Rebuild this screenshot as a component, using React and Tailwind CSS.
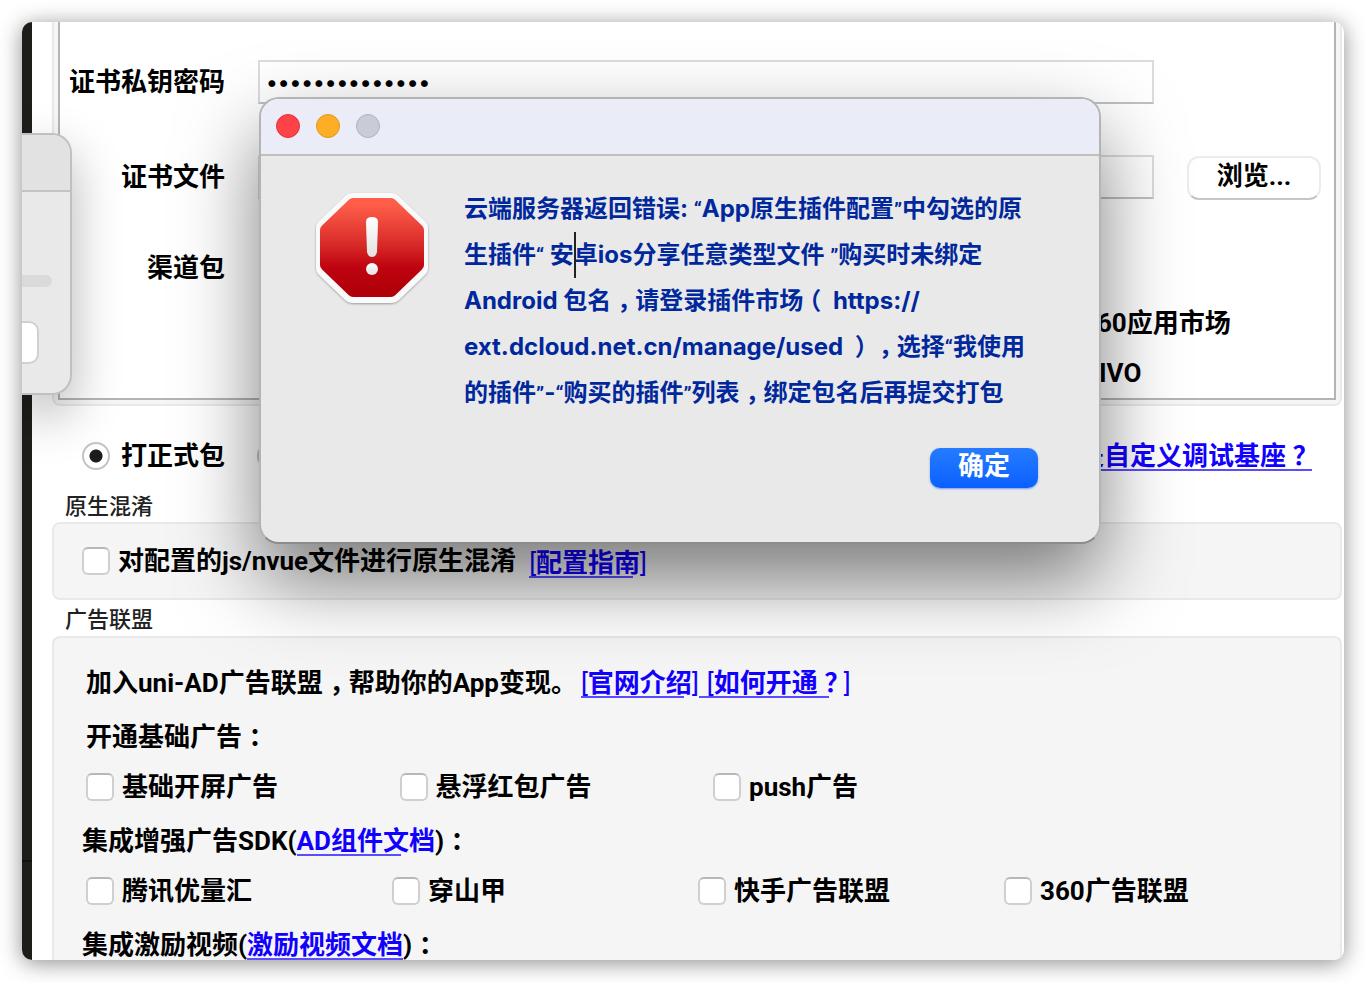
import React, { useState } from 'react';

// Full-width punctuation that sits in the middle of its cell
const Mid = ({ children }) => (
    <span className="inline-block w-[1em] text-center leading-none [font-feature-settings:'halt']">{children}</span>
);

const Quote = ({ children }) => (
    <span className="font-['Roboto',sans-serif] text-[20px] leading-none">{children}</span>
);

const Bracket = ({ children }) => <span className="font-normal">{children}</span>;

const CheckBox = ({ id, label }) => (
    <div className="flex items-center gap-2">
        <input
            id={id}
            type="checkbox"
            className="h-7 w-7 shrink-0 appearance-none rounded-md border-2 border-[#cfcfcf] border-t-[#b8b8b8] bg-white checked:bg-[#1a73ff]"
        />
        <label htmlFor={id} className="whitespace-nowrap">{label}</label>
    </div>
);

const Radio = ({ id, label, checked, onChange }) => (
    <div className="flex items-center gap-[11px]">
        <input
            id={id}
            type="radio"
            name="package"
            checked={checked}
            onChange={onChange}
            className="h-7 w-7 shrink-0 appearance-none rounded-full border-2 border-[#c4c4c4] bg-white checked:bg-[radial-gradient(circle,#1c1c1c_6px,#ffffff_7px)]"
        />
        <label htmlFor={id} className="whitespace-nowrap">{label}</label>
    </div>
);

const StopIcon = () => (
    <svg className="h-[116px] w-[120px]" viewBox="0 0 120 116" aria-hidden="true">
        <defs>
            <linearGradient id="stopRed" x1="0" y1="0" x2="0" y2="1">
                <stop offset="0" stopColor="#ff5f4a" />
                <stop offset="0.45" stopColor="#d92c2a" />
                <stop offset="0.72" stopColor="#bf0410" />
                <stop offset="1" stopColor="#b00009" />
            </linearGradient>
            <linearGradient id="stopMark" x1="0" y1="0" x2="0" y2="1">
                <stop offset="0" stopColor="#ffffff" />
                <stop offset="1" stopColor="#e2e2e2" />
            </linearGradient>
            <filter id="stopShadow" x="-20%" y="-20%" width="140%" height="140%">
                <feDropShadow dx="0" dy="1" stdDeviation="1" floodOpacity="0.35" />
            </filter>
        </defs>
        <path
            d="M41 14H79L105 39V77L79 102H41L15 77V39Z"
            fill="#fafafa"
            stroke="#fafafa"
            strokeWidth="22"
            strokeLinejoin="round"
            filter="url(#stopShadow)"
        />
        <path
            d="M41 14H79L106 40V75L79 101H41L14 75V40Z"
            fill="url(#stopRed)"
            stroke="url(#stopRed)"
            strokeWidth="12"
            strokeLinejoin="round"
        />
        <path d="M54 32Q54 27 60 27Q66 27 66 32L65 62Q64 67 60 67Q56 67 55 62Z" fill="url(#stopMark)" />
        <circle cx="60" cy="79" r="6" fill="url(#stopMark)" />
    </svg>
);

const ErrorDialog = ({ onClose }) => (
    <div
        role="alertdialog"
        aria-labelledby="error-text"
        className="absolute left-[237px] top-[75px] w-[842px] overflow-hidden rounded-[20px] border-2 border-[#b4b4b4] border-b-[#8c8c8c] bg-[#e9e9e9] bg-clip-padding shadow-[0_36px_80px_rgba(0,0,0,0.5)]"
    >
        <div className="flex h-[57px] items-center gap-4 border-b-2 border-[#bfbfbf] bg-[#eaedf7] px-[15px] pb-0.5">
            <button type="button" aria-label="关闭" onClick={onClose} className="h-6 w-6 rounded-full border border-[#e0353a] bg-[#ff4245]" />
            <button type="button" aria-label="最小化" className="h-6 w-6 rounded-full border border-[#de981c] bg-[#fdae25]" />
            <button type="button" aria-label="缩放" disabled className="h-6 w-6 rounded-full border border-[#b0b3bb] bg-[#c9ccd6]" />
        </div>
        <div className="flex gap-[32px] pl-[51px] pt-[30px]">
            <div className="shrink-0 pt-1">
                <StopIcon />
            </div>
            <div id="error-text" className="whitespace-nowrap text-2xl font-bold leading-[46px] text-[#00289c]">
                <p className="h-[46px]">云端服务器返回错误: <Quote>“</Quote>App原生插件配置<Quote>”</Quote>中勾选的原</p>
                <p className="h-[46px]">
                    生插件<Quote>“</Quote> 安<span className="relative"><span className="absolute -top-2 left-0 h-[46px] w-0.5 bg-[#222222]" /></span>卓ios分享任意类型文件 <Quote>”</Quote>购买时未绑定
                </p>
                <p className="h-[46px]">Android 包名<Mid>，</Mid>请登录插件市场<Mid>（</Mid> https://</p>
                <p className="h-[46px]">ext.dcloud.net.cn/manage/used <Mid>）</Mid><Mid>，</Mid>选择<Quote>“</Quote>我使用</p>
                <p className="h-[46px]">的插件<Quote>”</Quote>-<Quote>“</Quote>购买的插件<Quote>”</Quote>列表<Mid>，</Mid>绑定包名后再提交打包</p>
            </div>
        </div>
        <div className="flex justify-end pb-[54px] pr-[61px] pt-8">
            <button
                type="button"
                onClick={onClose}
                className="h-10 w-[108px] rounded-[10px] bg-gradient-to-b from-[#267bff] to-[#0a60ff] pb-1 text-[26px] font-bold leading-9 text-white shadow-[0_1px_2px_rgba(0,80,255,0.5)]"
            >
                确定
            </button>
        </div>
    </div>
);

// Edge of another window that overlaps the form on the left
const SideWindow = () => (
    <div className="absolute left-0 top-[111px] w-[50px] rounded-r-[20px] border-2 border-l-0 border-[#c0c0c0] bg-[#e9e9e9] shadow-[0_20px_50px_rgba(0,0,0,0.3)]">
        <div className="h-[57px] rounded-tr-[18px] border-b-2 border-[#c4c4c4] bg-[#e2e2e2]" />
        <div className="mt-[83px] h-3 w-[30px] rounded-r-full bg-[#dadada]" />
        <div className="mb-[29px] mt-[34px] h-[43px] w-[17px] rounded-r-[10px] border-2 border-l-0 border-[#d0d0d0] bg-white" />
    </div>
);

const link = "text-[#1200ff] bg-no-repeat bg-[linear-gradient(#5a4cff,#5a4cff)] bg-[position:0_31px]";
const field = "h-[44px] w-full border-2 border-[#dcdcdc] border-b-[#c0c0c0] bg-transparent px-1.5 outline-none";

const App = () => {
    const [open, setOpen] = useState(true);
    const [kind, setKind] = useState('release');

    return (
        <div className="flex h-screen bg-white p-[22px] font-['Inter','Noto_Sans_CJK_SC',sans-serif] text-[26px] font-bold leading-9 text-black [text-spacing-trim:space-all]">
            <div className="relative flex min-w-0 flex-1 overflow-hidden rounded-[10px] bg-white shadow-[0_3px_22px_rgba(0,0,0,0.45)]">
                <div className="flex w-[10px] shrink-0 flex-col bg-[#1d1e19]">
                    <div className="grow border-b-2 border-[#10110d]" />
                    <div className="h-[98px]" />
                </div>

                <main className="min-w-0 flex-1 pl-5 pr-0.5 font-['Roboto','Noto_Sans_CJK_SC',sans-serif]">
                    {/* Certificate and channels */}
                    <section className="rounded-b-lg border-2 border-t-0 border-[#e9e9e9] bg-[#f6f6f6] px-1 pb-1">
                        <div className="h-[378px] border-2 border-t-0 border-[#b4b4b4] bg-white pr-[13px] pt-[38px]">
                            <div className="grid grid-cols-[165px_minmax(0,1fr)_134px] items-center gap-x-[33px]">
                                <label htmlFor="password" className="text-right">证书私钥密码</label>
                                <input id="password" type="password" defaultValue="12345678901234" className={`${field} font-['Inter',sans-serif] text-[22px] font-medium`} />
                                <span />
                                <label htmlFor="cert" className="mt-[50px] text-right">证书文件</label>
                                <input id="cert" type="text" className={`${field} mt-[50px]`} />
                                <button type="button" className="mt-[52px] h-[44px] rounded-[12px] border-2 border-[#ececec] border-b-[#c6c6c6] bg-white pb-1">浏览...</button>
                            </div>
                            <div className="mt-[50px] w-[165px] text-right">渠道包</div>
                            <div className="mt-[14px] flex flex-col gap-[4px] pl-[986px]">
                                <div className="flex h-[46px] items-center">
                                    <CheckBox id="ch-360" label="360应用市场" />
                                </div>
                                <div className="flex h-[46px] items-center">
                                    <CheckBox id="ch-vivo" label="VIVO" />
                                </div>
                            </div>
                        </div>
                    </section>

                    <div className="flex h-[102px] items-center justify-between px-[30px] pb-0.5">
                        <div className="flex gap-8">
                            <Radio id="release" label="打正式包" checked={kind === 'release'} onChange={() => setKind('release')} />
                            <Radio id="custom" label="打自定义调试基座" checked={kind === 'custom'} onChange={() => setKind('custom')} />
                        </div>
                        <a href="#base" className={`${link} whitespace-nowrap bg-[length:100%_2px]`}>什么是自定义调试基座<Mid>？</Mid></a>
                    </div>

                    <h2 className="-mt-4 h-[30px] pl-[13px] text-[22px] font-medium leading-[30px] text-[#222222]">原生混淆</h2>
                    <section className="flex h-[78px] items-center gap-[13px] rounded-lg border-2 border-[#e9e9e9] bg-[#f5f5f5] pl-7">
                        <CheckBox id="obfuscate" label="对配置的js/nvue文件进行原生混淆" />
                        <a href="#guide" className={`${link} mt-1 bg-[length:104px_2px]`}><Bracket>[</Bracket>配置指南<Bracket>]</Bracket></a>
                    </section>

                    <h2 className="h-9 pl-[13px] pt-1 text-[22px] font-medium leading-8 text-[#222222]">广告联盟</h2>
                    <section className="whitespace-nowrap rounded-t-lg border-2 border-b-0 border-[#e9e9e9] bg-[#f5f5f5] pl-7 pt-[17px]">
                        <div className="flex h-14 items-center pl-1">
                            <span>加入uni-AD广告联盟<Mid>，</Mid>帮助你的App变现。</span>
                            <a href="#intro" className={`${link} ml-1 bg-[length:103px_2px]`}><Bracket>[</Bracket>官网介绍<Bracket>]</Bracket></a>
                            <a href="#open" className={`${link} bg-[length:130px_2px] pl-2`}><Bracket>[</Bracket>如何开通<Mid>？</Mid><Bracket>]</Bracket></a>
                        </div>
                        <div className="flex h-[52px] items-center pl-1">
                            <span>开通基础广告<Mid>：</Mid></span>
                        </div>
                        <div className="grid h-[52px] grid-cols-4 items-center pb-1 pl-1">
                            <CheckBox id="splash" label="基础开屏广告" />
                            <CheckBox id="redpack" label="悬浮红包广告" />
                            <CheckBox id="push" label="push广告" />
                        </div>
                        <div className="flex h-[52px] items-center">
                            <span>集成增强广告SDK(</span>
                            <a href="#ad-docs" className={`${link} bg-[length:104px_2px]`}>AD组件文档</a>
                            <span>)<Mid>：</Mid></span>
                        </div>
                        <div className="grid h-[52px] grid-cols-4 items-center pb-1 pl-1 pr-[30px]">
                            <CheckBox id="tencent" label="腾讯优量汇" />
                            <CheckBox id="pangle" label="穿山甲" />
                            <CheckBox id="kuaishou" label="快手广告联盟" />
                            <CheckBox id="ad360" label="360广告联盟" />
                        </div>
                        <div className="flex h-[52px] items-center">
                            <span>集成激励视频(</span>
                            <a href="#reward-docs" className={`${link} bg-[length:100%_2px]`}>激励视频文档</a>
                            <span>)<Mid>：</Mid></span>
                        </div>
                    </section>
                </main>

                <SideWindow />
                {open && <ErrorDialog onClose={() => setOpen(false)} />}
            </div>
        </div>
    );
};

export default App;
